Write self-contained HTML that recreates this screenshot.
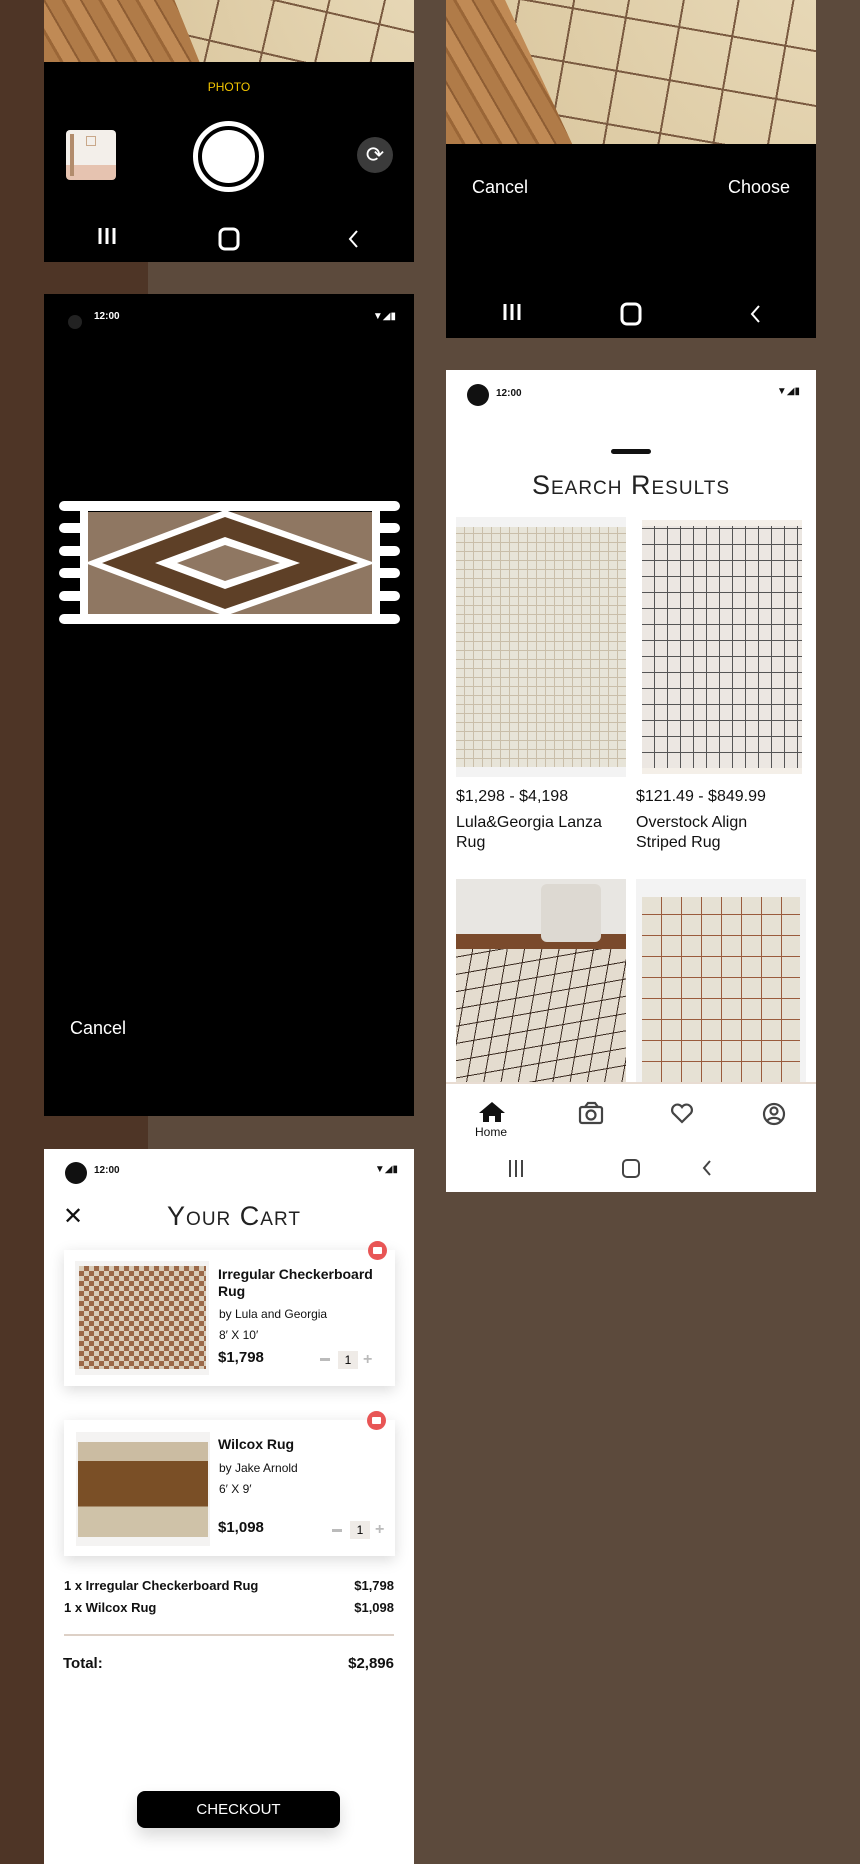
<!DOCTYPE html>
<html><head><meta charset="utf-8"><style>
*{margin:0;padding:0;box-sizing:border-box}
body{width:860px;height:1864px;background:#5c4a3c;position:relative;overflow:hidden;font-family:"Liberation Sans",Roboto,sans-serif}
.a{position:absolute}
.ph{position:absolute;overflow:hidden}
.carpet{background:
 repeating-linear-gradient(35deg,transparent 0 52px,#7a5a40 52px 54px),
 repeating-linear-gradient(-55deg,transparent 0 52px,#7a5a40 52px 54px),
 radial-gradient(circle at 60% 40%,#eadcbc,#d9c59c);}
.wood{overflow:hidden;background:repeating-linear-gradient(60deg,#b07b48 0 14px,#9a6637 14px 17px,#c08a55 17px 30px,#8e5d33 30px 32px)}
.st{font-size:10px;font-weight:bold}
.title{font-weight:300;font-variant:small-caps;letter-spacing:1px;color:#222;font-family:"Liberation Sans",sans-serif}
.card{position:absolute;background:#fff;box-shadow:0 4px 14px rgba(0,0,0,.15)}
.b{font-weight:bold}
</style></head><body>
<div class="a" style="left:0;top:0;width:44px;height:1864px;background:#4e3526"></div>
<div class="a" style="left:44px;top:262px;width:104px;height:32px;background:#4e3526"></div>
<div class="a" style="left:44px;top:1116px;width:104px;height:33px;background:#4e3526"></div>

<!-- phone 1 camera -->
<div class="ph" style="left:44px;top:0;width:370px;height:262px;background:#000">
 <div class="a wood" style="left:0;top:0;width:370px;height:62px">
  <div class="a carpet" style="left:150px;top:-200px;width:500px;height:400px;transform:rotate(-22deg);border-radius:30px"></div>
 </div>
 <div class="a" style="left:0;top:80px;width:370px;text-align:center;color:#f2c500;font-size:12px">PHOTO</div>
 <div class="a" style="left:22px;top:130px;width:50px;height:50px;border-radius:4px;background:linear-gradient(#f3efea 0 70%,#e6c3b0 70%)"><div class="a" style="left:4px;top:4px;width:4px;height:42px;background:#b28c6c"></div><div class="a" style="left:20px;top:6px;width:10px;height:10px;border:1px solid #c9a88a"></div></div>
 <div class="a" style="left:149px;top:121px;width:71px;height:71px;border-radius:50%;border:5px solid #fff"></div>
 <div class="a" style="left:158px;top:130px;width:53px;height:53px;border-radius:50%;background:#fff"></div>
 <div class="a" style="left:313px;top:137px;width:36px;height:36px;border-radius:50%;background:#3b3b3b;color:#fff;text-align:center;line-height:36px;font-size:22px">⟳</div>
 <svg class="a" style="left:0;top:222px" width="370" height="34"><g fill="none" stroke="#fff" stroke-width="3"><path d="M56 6v16M63 6v16M70 6v16"/><rect x="176" y="7" width="18" height="20" rx="5"/><path d="M313 9l-7 8 7 8" stroke-width="2"/></g></svg>
</div>

<!-- phone 2 -->
<div class="ph" style="left:446px;top:0;width:370px;height:338px;background:#000">
 <div class="a wood" style="left:0;top:0;width:370px;height:144px">
  <div class="a carpet" style="left:90px;top:-250px;width:600px;height:500px;transform:rotate(-25deg);border-radius:40px"></div>
 </div>
 <div class="a" style="left:26px;top:177px;color:#fff;font-size:18px">Cancel</div>
 <div class="a" style="right:26px;top:177px;color:#fff;font-size:18px">Choose</div>
 <svg class="a" style="left:0;top:298px" width="370" height="34"><g fill="none" stroke="#fff" stroke-width="3"><path d="M59 6v16M66 6v16M73 6v16"/><rect x="176" y="6" width="18" height="20" rx="5"/><path d="M313 8l-7 8 7 8" stroke-width="2"/></g></svg>
</div>

<!-- phone 3 black -->
<div class="ph" style="left:44px;top:294px;width:370px;height:822px;background:#000">
 <div class="a" style="left:24px;top:21px;width:14px;height:14px;border-radius:50%;background:#222"></div>
 <div class="a st" style="left:50px;top:17px;color:#fff">12:00</div>
 <div class="a" style="right:18px;top:17px;color:#fff;font-size:10px">▼◢▮</div>
 <svg class="a" style="left:0;top:0" width="370" height="822" viewBox="44 294 370 822">
  <g fill="#fff">
   <rect x="59" y="501" width="341" height="10" rx="5"/><rect x="59" y="614" width="341" height="10" rx="5"/>
   <rect x="80" y="501" width="8" height="123"/><rect x="372" y="501" width="8" height="123"/>
   <rect x="59" y="523" width="30" height="10" rx="5"/><rect x="59" y="546" width="30" height="10" rx="5"/><rect x="59" y="568" width="30" height="10" rx="5"/><rect x="59" y="591" width="30" height="10" rx="5"/>
   <rect x="370" y="523" width="30" height="10" rx="5"/><rect x="370" y="546" width="30" height="10" rx="5"/><rect x="370" y="568" width="30" height="10" rx="5"/><rect x="370" y="591" width="30" height="10" rx="5"/>
  </g>
  <rect x="88" y="512" width="284" height="102" fill="#8f7762"/>
  <polygon points="225,510 375,563 225,616 85,563" fill="#fff"/>
  <polygon points="225,517 358,563 225,609 102,563" fill="#5e4027"/>
  <polygon points="225,537 300,563 225,589 155,563" fill="#fff"/>
  <polygon points="225,545 280,563 225,581 177,563" fill="#8f7762"/>
 </svg>
 <div class="a" style="left:26px;top:724px;color:#fff;font-size:18px">Cancel</div>
</div>

<!-- phone 4 search -->
<div class="ph" style="left:446px;top:370px;width:370px;height:822px;background:#fff">
 <div class="a" style="left:21px;top:14px;width:22px;height:22px;border-radius:50%;background:#111"></div>
 <div class="a st" style="left:50px;top:18px;color:#111">12:00</div>
 <div class="a" style="right:16px;top:16px;color:#111;font-size:10px">▼◢▮</div>
 <div class="a" style="left:165px;top:79px;width:40px;height:5px;border-radius:3px;background:#111"></div>
 <div class="a title" style="left:0;top:100px;width:370px;text-align:center;font-size:27px">Search Results</div>
 <div class="a" style="left:10px;top:147px;width:170px;height:260px;background:#f3f3f3"><div class="a" style="left:0;top:10px;width:170px;height:240px;background:repeating-linear-gradient(90deg,transparent 0 8px,#c9bea9 8px 9px),repeating-linear-gradient(0deg,transparent 0 8px,#c9bea9 8px 9px),#e7e4d8"></div></div>
 <div class="a" style="left:196px;top:150px;width:160px;height:254px;background:repeating-linear-gradient(90deg,transparent 0 12px,#555 12px 13px),repeating-linear-gradient(0deg,transparent 0 15px,#555 15px 16px),#ece7e2;border-top:6px solid #f4efe8;border-bottom:6px solid #f4efe8"></div>
 <div class="a" style="left:10px;top:418px;font-size:16px;color:#111">$1,298 - $4,198</div>
 <div class="a" style="left:10px;top:443px;font-size:16px;color:#111;line-height:20px">Lula&amp;Georgia Lanza<br>Rug</div>
 <div class="a" style="left:190px;top:418px;font-size:16px;color:#111">$121.49 - $849.99</div>
 <div class="a" style="left:190px;top:443px;font-size:16px;color:#111;line-height:20px">Overstock Align<br>Striped Rug</div>
 <div class="a" style="left:10px;top:509px;width:170px;height:203px;background:linear-gradient(#e8e6e2 0 55px,#7a4a2c 55px 70px,#e3ddd3 70px)"><div class="a" style="left:0;top:70px;width:170px;height:133px;background:repeating-linear-gradient(100deg,transparent 0 16px,#3a2a20 16px 17px),repeating-linear-gradient(-10deg,transparent 0 16px,#3a2a20 16px 17px),#e4dccf"></div><div class="a" style="left:85px;top:5px;width:60px;height:58px;background:#ddd9d2;border-radius:6px"></div></div>
 <div class="a" style="left:190px;top:509px;width:170px;height:203px;background:#f3f3f3"><div class="a" style="left:6px;top:18px;width:158px;height:185px;background:repeating-linear-gradient(90deg,transparent 0 19px,#9a5b3c 19px 20px),repeating-linear-gradient(0deg,transparent 0 20px,#9a5b3c 20px 21px),#e6e1d4"></div></div>
 <div class="a" style="left:0;top:712px;width:370px;height:110px;background:#fff;border-top:2px solid #e8dcd2"></div>
 <svg class="a" style="left:0;top:722px" width="370" height="100"><g fill="#111"><path d="M46 10l-13 11h4v9h6v-6h6v6h6v-9h4z"/></g><g fill="none" stroke="#444" stroke-width="2.2"><rect x="134" y="15" width="22" height="16" rx="2"/><path d="M139 15l3-4h7l3 4"/><circle cx="145" cy="23" r="4.5"/><path d="M236 30l-9-9a5 5 0 0 1 9-6a5 5 0 0 1 9 6z"/><circle cx="328" cy="22" r="10"/><circle cx="328" cy="19" r="3.5"/><path d="M321 29a8 6 0 0 1 14 0"/></g><g fill="none" stroke="#444" stroke-width="2"><path d="M64 68v17M70 68v17M76 68v17"/><rect x="177" y="68" width="16" height="17" rx="4"/><path d="M264 69l-6 7 6 7"/></g></svg>
 <div class="a" style="left:29px;top:755px;font-size:12px;color:#111">Home</div>
</div>

<!-- phone 5 cart -->
<div class="ph" style="left:44px;top:1149px;width:370px;height:715px;background:#fff">
 <div class="a" style="left:21px;top:13px;width:22px;height:22px;border-radius:50%;background:#111"></div>
 <div class="a st" style="left:50px;top:16px;color:#111">12:00</div>
 <div class="a" style="right:16px;top:15px;color:#111;font-size:10px">▼◢▮</div>
 <div class="a" style="left:19px;top:53px;font-size:24px;font-weight:300;color:#111">✕</div>
 <div class="a title" style="left:0;top:52px;width:370px;text-align:center;font-size:27px;padding-left:10px">Your Cart</div>

 <div class="card" style="left:20px;top:101px;width:331px;height:136px"></div>
 <div class="a" style="left:31px;top:112px;width:134px;height:114px;background:#f4f3f2"><div class="a" style="left:4px;top:5px;width:127px;height:103px;background:conic-gradient(#9b6848 25%,#d9ccb8 0 50%,#9b6848 0 75%,#d9ccb8 0) 0 0/10px 10px"></div></div>
 <div class="a b" style="left:174px;top:117px;font-size:14px;line-height:17px;color:#111">Irregular Checkerboard<br>Rug</div>
 <div class="a" style="left:175px;top:158px;font-size:12px;color:#111">by Lula and Georgia</div>
 <div class="a" style="left:175px;top:179px;font-size:12px;color:#111">8′ X 10′</div>
 <div class="a b" style="left:174px;top:200px;font-size:15px;color:#111">$1,798</div>
 <div class="a" style="left:276px;top:209px;width:10px;height:3px;background:#bbb"></div>
 <div class="a" style="left:294px;top:202px;width:20px;height:18px;background:#efebe7;font-size:12px;text-align:center;line-height:18px">1</div>
 <div class="a" style="left:319px;top:202px;color:#bbb;font-size:16px;font-weight:bold">+</div>
 <div class="a" style="left:324px;top:92px;width:19px;height:19px;border-radius:50%;background:#e85555"><div class="a" style="left:5px;top:6px;width:9px;height:7px;background:#fff;border-radius:1px"></div></div>

 <div class="card" style="left:20px;top:271px;width:331px;height:136px"></div>
 <div class="a" style="left:32px;top:283px;width:134px;height:114px;background:#f4f3f2"><div class="a" style="left:2px;top:10px;width:130px;height:95px;background:linear-gradient(#cbbca2 0 20%,#7a4f26 20% 68%,#cfc2a8 68%)"></div></div>
 <div class="a b" style="left:174px;top:287px;font-size:14px;color:#111">Wilcox Rug</div>
 <div class="a" style="left:175px;top:312px;font-size:12px;color:#111">by Jake Arnold</div>
 <div class="a" style="left:175px;top:333px;font-size:12px;color:#111">6′ X 9′</div>
 <div class="a b" style="left:174px;top:370px;font-size:15px;color:#111">$1,098</div>
 <div class="a" style="left:288px;top:380px;width:10px;height:3px;background:#bbb"></div>
 <div class="a" style="left:306px;top:372px;width:20px;height:18px;background:#efebe7;font-size:12px;text-align:center;line-height:18px">1</div>
 <div class="a" style="left:331px;top:372px;color:#bbb;font-size:16px;font-weight:bold">+</div>
 <div class="a" style="left:323px;top:262px;width:19px;height:19px;border-radius:50%;background:#e85555"><div class="a" style="left:5px;top:6px;width:9px;height:7px;background:#fff;border-radius:1px"></div></div>

 <div class="a b" style="left:20px;top:429px;font-size:13px;color:#111">1 x Irregular Checkerboard Rug</div>
 <div class="a b" style="right:20px;top:429px;font-size:13px;color:#111">$1,798</div>
 <div class="a b" style="left:20px;top:451px;font-size:13px;color:#111">1 x Wilcox Rug</div>
 <div class="a b" style="right:20px;top:451px;font-size:13px;color:#111">$1,098</div>
 <div class="a" style="left:20px;top:485px;width:330px;height:2px;background:#ddd0c6"></div>
 <div class="a b" style="left:19px;top:506px;font-size:15px;color:#111">Total:</div>
 <div class="a b" style="right:20px;top:506px;font-size:15px;color:#111">$2,896</div>
 <div class="a" style="left:93px;top:642px;width:203px;height:37px;border-radius:8px;background:#000;color:#fff;text-align:center;line-height:37px;font-size:15px;box-shadow:0 8px 16px rgba(0,0,0,.15)">CHECKOUT</div>
</div>
</body></html>
